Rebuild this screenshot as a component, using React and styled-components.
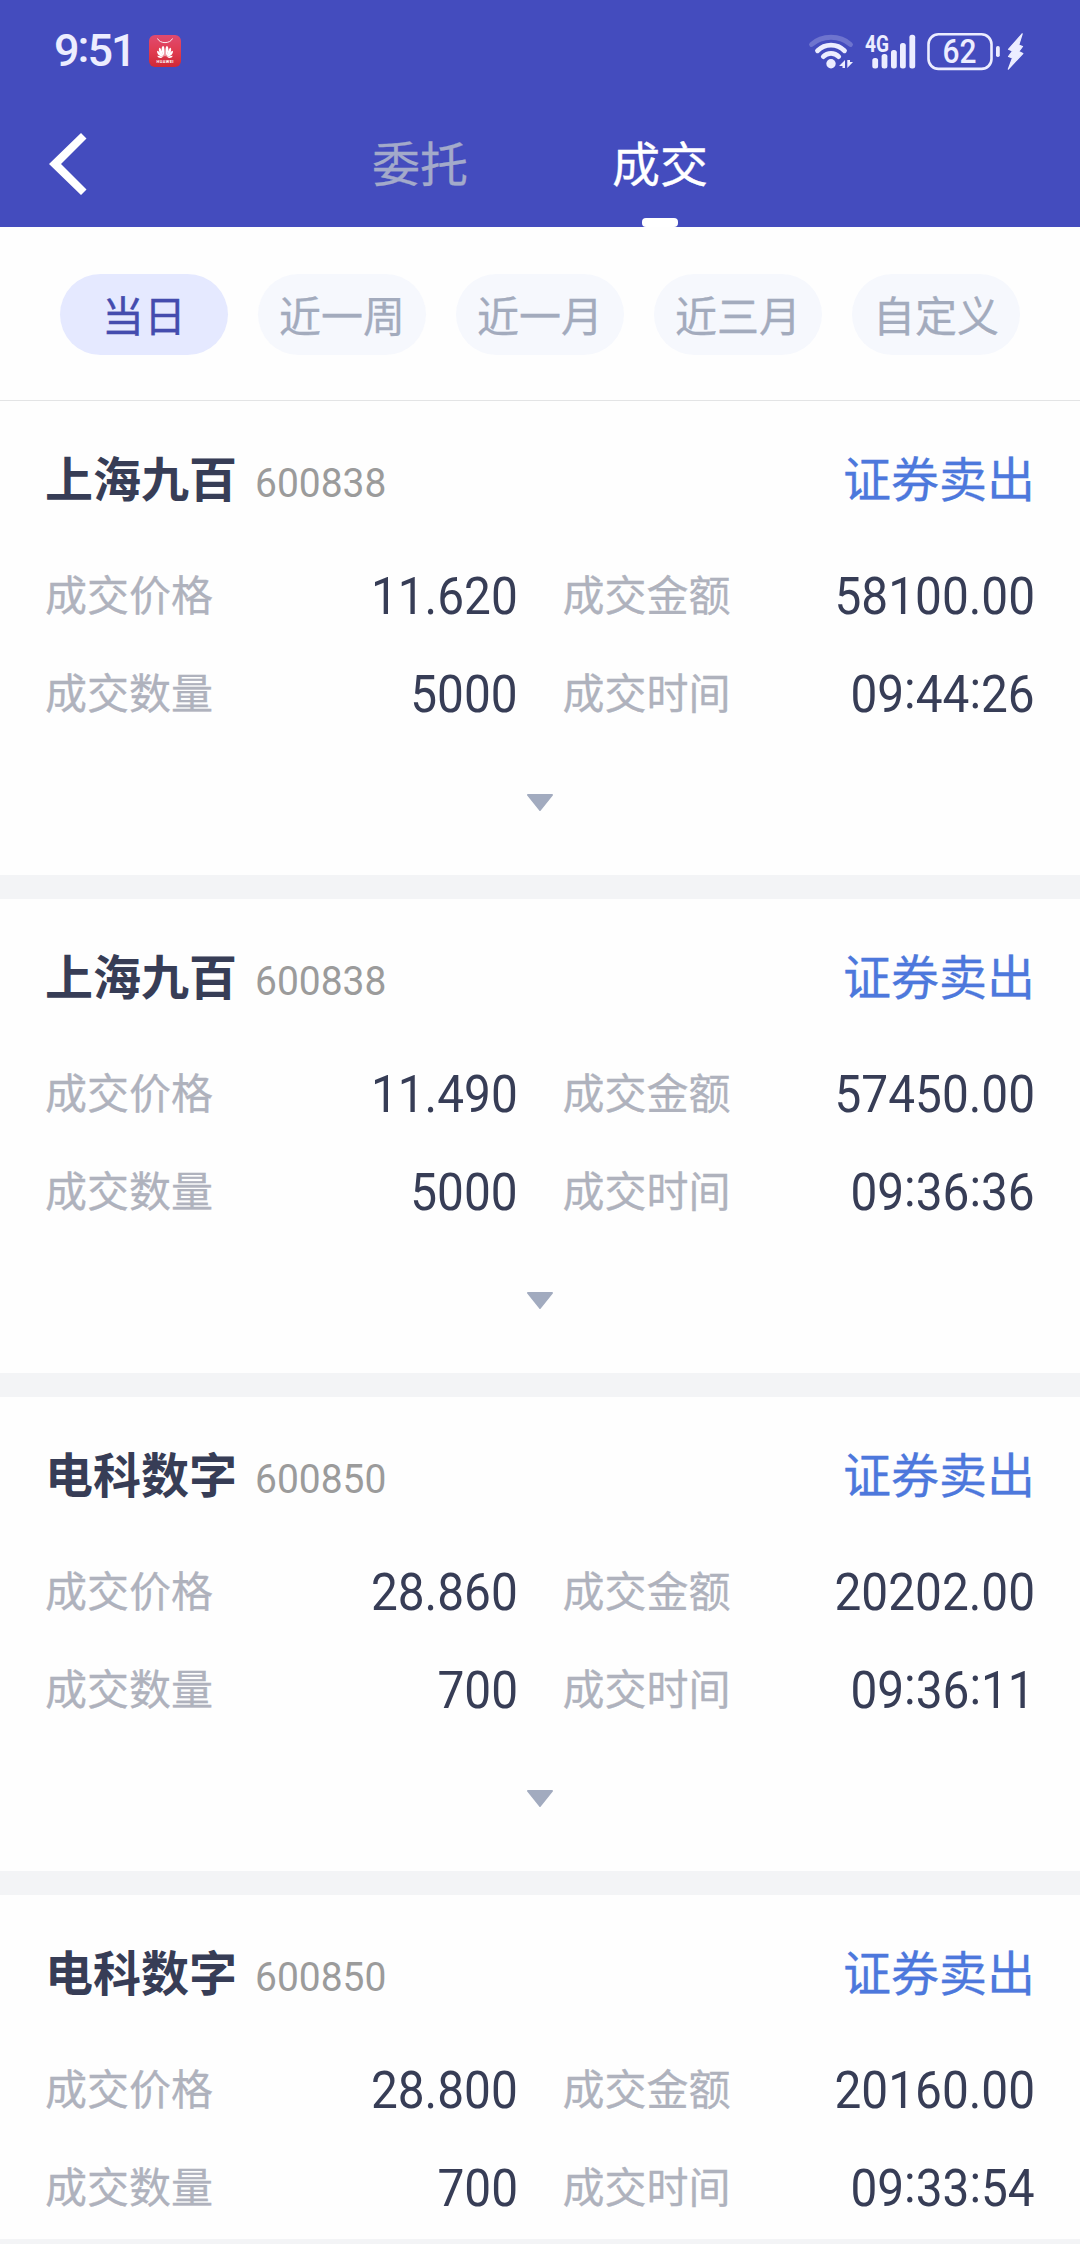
import { useState } from "react"
import styled, { createGlobalStyle } from "styled-components"

const GlobalStyle = createGlobalStyle`
  * {
    box-sizing: border-box;
  }
  body {
    margin: 0;
    background: #fefefe;
    font-family: "Noto Sans CJK SC", sans-serif;
  }
  button {
    padding: 0;
    border: none;
    background: none;
    font-family: inherit;
  }
`

const Screen = styled.div`
  display: flex;
  flex-direction: column;
  width: 1080px;
  height: 2244px;
  overflow: hidden;
  background: #fefefe;
`

const Header = styled.header`
  flex: none;
  height: 227px;
  background: #444cbe;
`

const StatusBar = styled.div`
  display: flex;
  justify-content: space-between;
  height: 102px;
  padding: 0 54px;
`

const StatusSide = styled.div`
  display: flex;
  align-items: center;
  gap: 14px;
`

const Clock = styled.span`
  color: #ecedff;
  font-family: Roboto, sans-serif;
  font-size: 45px;
  font-weight: 500;
  line-height: 102px;
  letter-spacing: -2px;
`

const Colon = styled.span`
  vertical-align: 4px;
  line-height: 1;
`

const NavBar = styled.nav`
  display: grid;
  grid-template-columns: 300px 240px 240px 300px;
  height: 125px;
`

const BackButton = styled.button`
  display: flex;
  align-items: center;
  padding: 0 0 1px 49px;
`

const Tab = styled.button`
  display: flex;
  flex-direction: column;
  align-items: center;
  justify-content: space-between;
  padding-top: 25px;
  color: ${({ $active }) => ($active ? "#ffffff" : "#a3aaca")};
  font-size: 48px;
  line-height: 68px;
  -webkit-text-stroke: 0.3px currentColor;

  &::after {
    content: "";
    width: 36px;
    height: 9px;
    border-radius: 4px;
    background: ${({ $active }) => ($active ? "#ffffff" : "transparent")};
  }
`

const Filters = styled.div`
  display: flex;
  flex: none;
  gap: 30px;
  height: 174px;
  padding: 47px 60px 0;
  border-bottom: 1px solid #e3e4e5;
`

const Pill = styled.button`
  flex: 1;
  height: 81px;
  padding-bottom: 3px;
  border-radius: 41px;
  background: ${({ $active }) => ($active ? "#e5e9ff" : "#f6f8fd")};
  color: ${({ $active }) => ($active ? "#444cae" : "#a3abbd")};
  font-size: 42px;
  line-height: 77px;
  -webkit-text-stroke: 0.3px currentColor;
`

const List = styled.main`
  display: flex;
  flex: 1;
  flex-direction: column;
  gap: 24px;
  overflow: hidden;
  background: #f3f4f6;
`

const Card = styled.article`
  flex: none;
  height: 474px;
  padding: 44px 45px 0;
  background: #fefefe;
`

const CardHead = styled.div`
  display: flex;
  align-items: baseline;
  height: 66px;
  margin-bottom: 34px;
  line-height: 62px;
`

const StockName = styled.h2`
  margin: 0;
  color: #373d56;
  font-size: 48px;
  font-weight: 700;
`

const StockCode = styled.span`
  margin-left: 18px;
  color: #9b9b9b;
  font-family: Roboto, sans-serif;
  font-size: 41px;
  transform: scaleX(0.95);
  transform-origin: left;
`

const Action = styled.span`
  margin-left: auto;
  color: #4d78dc;
  font-size: 48px;
  -webkit-text-stroke: 0.3px currentColor;
`

const Fields = styled.dl`
  display: grid;
  grid-template-columns: 1fr 1fr;
  column-gap: 45px;
  margin: 0;
`

const Field = styled.div`
  display: flex;
  align-items: center;
  justify-content: space-between;
  height: 98px;
`

const Label = styled.dt`
  padding-bottom: 3px;
  color: #afb2bd;
  font-size: 42px;
  line-height: 60px;
  -webkit-text-stroke: 0.3px currentColor;
`

const Value = styled.dd`
  margin: 0;
  padding-top: 5px;
  color: #373d56;
  font-family: Roboto, sans-serif;
  font-size: 51px;
  line-height: 60px;
  transform: scaleX(0.937);
  transform-origin: right;
`

const Expand = styled.button`
  display: flex;
  justify-content: center;
  width: 100%;
  padding-top: 53px;
`

const BottomBar = styled.footer`
  flex: none;
  height: 5px;
  background: #f3f4f6;
`

const tabs = ["委托", "成交"]
const ranges = ["当日", "近一周", "近一月", "近三月", "自定义"]

const trades = [
  { name: "上海九百", code: "600838", action: "证券卖出", price: "11.620", amount: "58100.00", count: "5000", time: "09:44:26" },
  { name: "上海九百", code: "600838", action: "证券卖出", price: "11.490", amount: "57450.00", count: "5000", time: "09:36:36" },
  { name: "电科数字", code: "600850", action: "证券卖出", price: "28.860", amount: "20202.00", count: "700", time: "09:36:11" },
  { name: "电科数字", code: "600850", action: "证券卖出", price: "28.800", amount: "20160.00", count: "700", time: "09:33:54" },
]

// the colon sits at mid-height of the digits
const Time = ({ value }) =>
  value.split(":").map((part, i) => (
    <span key={i}>
      {i > 0 && <Colon>:</Colon>}
      {part}
    </span>
  ))

const AppBadge = () => (
  <svg width="32" height="32" viewBox="0 0 32 32">
    <defs>
      <linearGradient id="badge" x1="0" y1="0" x2="0" y2="1">
        <stop offset="0" stopColor="#e04a70" />
        <stop offset="0.5" stopColor="#e03c50" />
        <stop offset="1" stopColor="#cf2836" />
      </linearGradient>
    </defs>
    <rect width="32" height="32" rx="6" fill="url(#badge)" />
    <path d="M8.5 3.5C11 9 21 9 23.500 3.500" fill="none" stroke="#fff" strokeWidth="0.9" />
    <g fill="#fff">
      <path d="M15.400 21.500C12 17 12 12 14 11C15.600 11 15.800 16 15.400 21.500Z" />
      <path d="M14.600 21.700C10 19 9 14 10.500 12.800C12 13 14 18 14.600 21.700Z" />
      <path d="M14 22C9.500 21.500 7.500 18 8.200 15.800C10 16 13 19.500 14 22Z" />
      <path d="M13.600 22.600C11 23.600 8.800 22.500 8.300 20.700C10 20.500 12.500 21.500 13.600 22.600Z" />
      <path d="M16.600 21.500C20 17 20 12 18 11C16.400 11 16.200 16 16.600 21.500Z" />
      <path d="M17.400 21.700C22 19 23 14 21.500 12.800C20 13 18 18 17.400 21.700Z" />
      <path d="M18 22C22.500 21.500 24.500 18 23.800 15.800C22 16 19 19.500 18 22Z" />
      <path d="M18.400 22.600C21 23.600 23.200 22.500 23.700 20.700C22 20.500 19.500 21.500 18.400 22.600Z" />
    </g>
    <text x="16" y="28" textAnchor="middle" fill="#fff" fontFamily="Roboto, sans-serif" fontSize="4" fontWeight="700" textLength="17">
      HUAWEI
    </text>
  </svg>
)

const StatusIcons = () => (
  <svg width="220" height="50" viewBox="806 25 220 50" fill="#ecedff">
    <g fill="none" stroke="#ecedff" strokeWidth="4.800" strokeLinecap="round">
      <path d="M811.500 43.500C822 33.800 840 33.800 850.500 43.500" opacity="0.25" />
      <path d="M817.500 49.800C825 42.200 837 42.200 844.500 49.800" />
      <path d="M823.300 55.600C827.500 51.200 834.500 51.200 838.700 55.600" />
    </g>
    <circle cx="831" cy="62.700" r="4.700" />
    <path d="M845 59V67H842.500V65H839Z M847.300 67V59H850V61H853Z" />
    <text x="865" y="50.500" fontFamily="Roboto, sans-serif" fontSize="23" fontWeight="700" textLength="24" lengthAdjust="spacingAndGlyphs">
      4G
    </text>
    <rect x="872.300" y="57" width="5.800" height="10.400" rx="2.500" />
    <rect x="881.600" y="53" width="5.800" height="14.400" rx="2.500" />
    <rect x="891" y="49" width="5.800" height="18.400" rx="2.500" />
    <rect x="900" y="42" width="5.800" height="25.400" rx="2.500" />
    <rect x="909.400" y="33.700" width="5.800" height="33.700" rx="2.500" />
    <rect x="928.500" y="33.300" width="63" height="34.600" rx="10" fill="none" stroke="#ecedff" strokeWidth="2.600" />
    <text x="959.500" y="62.300" textAnchor="middle" fontFamily="Roboto, sans-serif" fontSize="32.500" fontWeight="500" textLength="34" lengthAdjust="spacingAndGlyphs">
      62
    </text>
    <rect x="996" y="45" width="3.800" height="11" rx="1.800" />
    <path
      d="M1022.200 32.800L1008.500 48.300L1012.500 50L1008.500 55.500L1012.500 57L1008.300 68.200L1022.800 52.500L1018.800 50.500L1022.500 45.500L1018.700 44Z"
      stroke="#ecedff"
      strokeWidth="1.200"
      strokeLinejoin="round"
    />
  </svg>
)

const App = () => {
  const [tab, setTab] = useState("成交")
  const [range, setRange] = useState("当日")

  return (
    <Screen>
      <GlobalStyle />
      <Header>
        <StatusBar>
          <StatusSide>
            <Clock>
              <Time value="9:51" />
            </Clock>
            <AppBadge />
          </StatusSide>
          <StatusSide>
            <StatusIcons />
          </StatusSide>
        </StatusBar>
        <NavBar>
          <BackButton type="button">
            <svg width="38" height="62" viewBox="0 0 38 62" fill="#fff">
              <path d="M32 0L37.500 5.500L12 31L37.500 56.500L32 62L0 31Z" />
            </svg>
          </BackButton>
          {tabs.map((item) => (
            <Tab key={item} type="button" $active={item === tab} onClick={() => setTab(item)}>
              {item}
            </Tab>
          ))}
        </NavBar>
      </Header>

      <Filters>
        {ranges.map((item) => (
          <Pill key={item} type="button" $active={item === range} onClick={() => setRange(item)}>
            {item}
          </Pill>
        ))}
      </Filters>

      <List>
        {trades.map((trade) => (
          <Card key={trade.time}>
            <CardHead>
              <StockName>{trade.name}</StockName>
              <StockCode>{trade.code}</StockCode>
              <Action>{trade.action}</Action>
            </CardHead>
            <Fields>
              <Field>
                <Label>成交价格</Label>
                <Value>{trade.price}</Value>
              </Field>
              <Field>
                <Label>成交金额</Label>
                <Value>{trade.amount}</Value>
              </Field>
              <Field>
                <Label>成交数量</Label>
                <Value>{trade.count}</Value>
              </Field>
              <Field>
                <Label>成交时间</Label>
                <Value>
                  <Time value={trade.time} />
                </Value>
              </Field>
            </Fields>
            <Expand type="button">
              <svg width="28" height="17" viewBox="0 0 28 17">
                <path d="M2 1H26L14 16Z" fill="#a2abbf" stroke="#a2abbf" strokeWidth="2" strokeLinejoin="round" />
              </svg>
            </Expand>
          </Card>
        ))}
      </List>
      <BottomBar />
    </Screen>
  )
}

export default App
